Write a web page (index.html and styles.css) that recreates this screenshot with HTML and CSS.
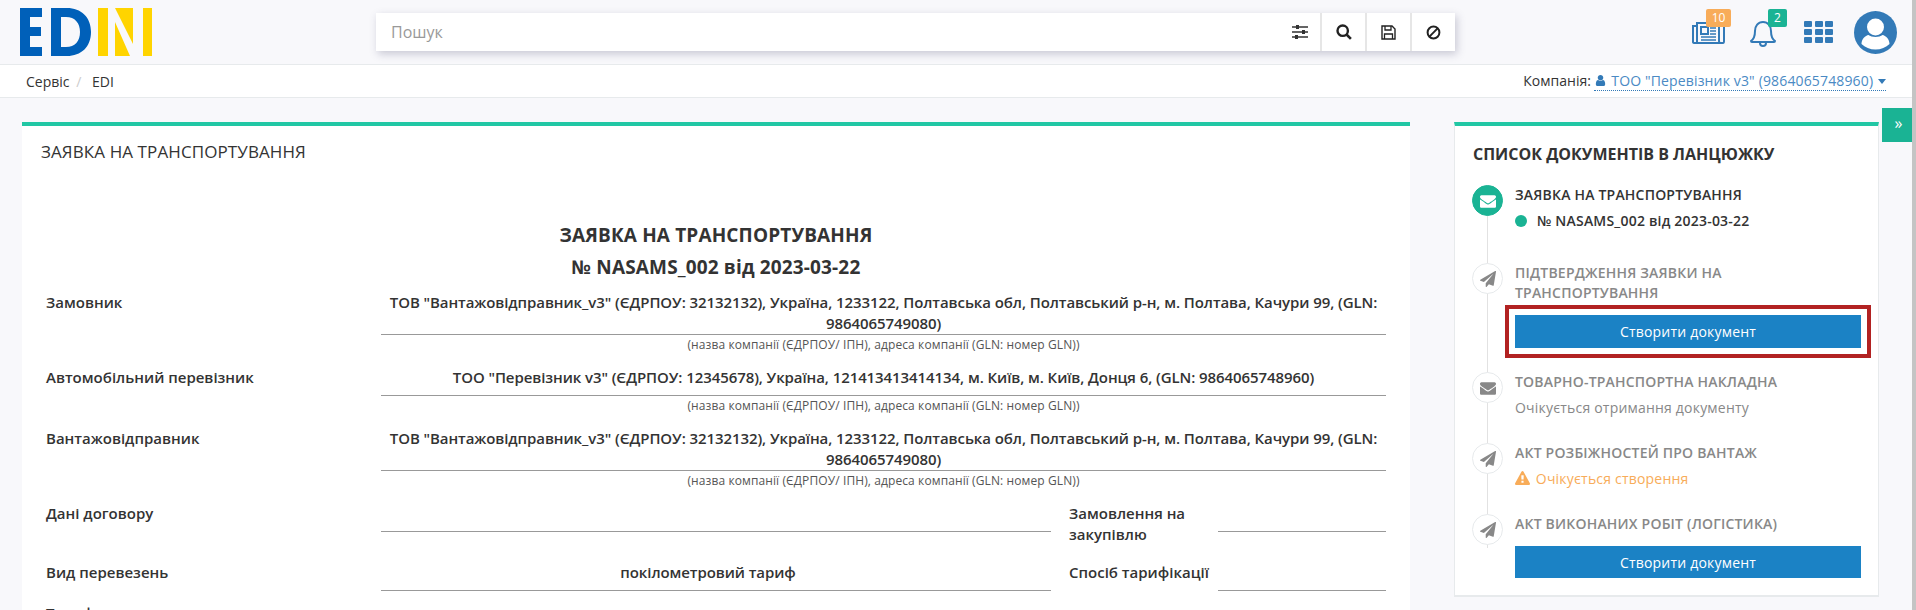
FILE: index.html
```html
<!DOCTYPE html>
<html lang="uk">
<head>
    <meta charset="UTF-8">
    <title>EDI</title>
    <link rel="stylesheet" href="styles.css">
</head>
<body>
    <header class="topbar">
        <svg class="logo" width="132" height="48" viewBox="0 0 132 48">
            <path fill="#0060b9" d="M0 0h22v9H10v10h11v9H10v11h12v9H0z"/>
            <path fill="#0060b9" fill-rule="evenodd" d="M31 0h16c14 0 24 9 24 24s-10 24-24 24H31zM41 9v30h5c9 0 14-6 14-15S55 9 46 9z"/>
            <rect fill="#ffd400" x="78" width="10" height="48"/>
            <path fill="#ffd400" d="M95 0h18v36zM95 14l15 34H95zM123 0h9v48h-9z"/>
        </svg>
        <div class="search">
            <div class="search-input">
                <span class="placeholder">Пошук</span>
                <svg class="search-icon" width="16" height="14" viewBox="0 0 16 14">
                    <path d="M0 2h16M0 7h16M0 12h16" stroke="#333" stroke-width="1.4"/>
                    <rect x="4" y="0" width="3" height="4" fill="#333"/>
                    <rect x="10" y="5" width="3" height="4" fill="#333"/>
                    <rect x="3" y="10" width="3" height="4" fill="#333"/>
                </svg>
            </div>
            <div class="search-btn">
                <svg width="16" height="16" viewBox="0 0 16 16"><circle cx="6.7" cy="6.7" r="5.2" fill="none" stroke="#222" stroke-width="2.4"/><path d="M10.500 10.500l4.400 4.400" stroke="#222" stroke-width="2.600"/></svg>
            </div>
            <div class="search-btn">
                <svg width="15" height="15" viewBox="0 0 15 15"><path d="M1 1h10l3 3v10H1z" fill="none" stroke="#222" stroke-width="1.4"/><path d="M4 1v4h6V1M3.500 14V9h8v5" fill="none" stroke="#222" stroke-width="1.3"/></svg>
            </div>
            <div class="search-btn">
                <svg width="15" height="15" viewBox="0 0 15 15"><circle cx="7.500" cy="7.500" r="5.900" fill="none" stroke="#222" stroke-width="2"/><path d="M3.400 11.600l8.200-8.200" stroke="#222" stroke-width="2"/></svg>
            </div>
        </div>
        <div class="top-icons">
            <div class="top-icon icon-news">
                <svg width="33" height="22" viewBox="0 0 33 22" fill="none" stroke="#337ab7" stroke-width="2">
                    <path d="M5 4H1v16c0 1 1 1 2 1h28c1 0 1-1 1-2V4h-5"/>
                    <path d="M5 20V1h22v18c0 1 .5 2 1.500 2"/>
                    <rect x="9" y="5" width="7" height="7"/>
                    <path d="M18 6h6M18 9h6M18 12h6M9 15h15M9 18h15" stroke-width="1.600"/>
                </svg>
                <span class="badge badge-orange">10</span>
            </div>
            <div class="top-icon icon-bell">
                <svg width="26" height="29" viewBox="0 0 26 29" fill="none" stroke="#337ab7" stroke-width="2">
                    <path d="M1 23c3-2 4-5 4-10 0-5 3-9 8-9s8 4 8 9c0 5 1 8 4 10 0 .5-.5 1-1 1H2c-.5 0-1-.5-1-1z"/>
                    <path d="M10 25c0 2 1.500 3 3 3s3-1 3-3"/>
                </svg>
                <span class="badge badge-green">2</span>
            </div>
            <div class="apps">
                <i></i><i></i><i></i><i></i><i></i><i></i><i></i><i></i><i></i>
            </div>
            <svg class="avatar" width="43" height="43" viewBox="0 0 43 43">
                <circle cx="21.500" cy="21.500" r="21.500" fill="#337ab7"/>
                <circle cx="21.500" cy="16" r="8.500" fill="#fff"/>
                <path d="M7.500 33c0-5 4-8.500 7-9 3 2.500 11 2.500 14 0 3 .5 7 4 7 9-3.500 3.500-8.500 5.500-14 5.500s-10.500-2-14-5.500z" fill="#fff"/>
            </svg>
        </div>
    </header>

    <nav class="crumbs">
        <div class="crumb-path">
            <span>Сервіс</span>
            <span class="crumb-sep">/</span>
            <span>EDI</span>
        </div>
        <div class="company">
            <span>Компанія:</span>
            <span class="company-link">
                <svg width="13" height="13" viewBox="0 0 1792 1792"><path fill="#337ab7" d="M1536 1399q0 109-62.5 187t-150.500 78h-854q-88 0-150.500-78t-62.500-187q0-85 8.500-160.500t31.500-152 58.500-131 94-89 134.500-34.500q131 128 313 128t313-128q76 0 134.500 34.500t94 89 58.500 131 31.500 152 8.500 160.500zm-256-887q0 159-112.500 271.500t-271.500 112.500-271.500-112.500-112.500-271.500 112.500-271.500 271.500-112.500 271.500 112.500 112.500 271.500z"/></svg>
                ТОО "Перевізник v3" (9864065748960)
                <span class="caret"></span>
            </span>
        </div>
    </nav>

    <main class="content">
        <section class="panel doc-panel">
            <h2 class="panel-title">ЗАЯВКА НА ТРАНСПОРТУВАННЯ</h2>
            <div class="doc-head">
                <div>ЗАЯВКА НА ТРАНСПОРТУВАННЯ</div>
                <div>№ NASAMS_002 від 2023-03-22</div>
            </div>

            <div class="row">
                <div class="label">Замовник</div>
                <div class="field-wrap">
                    <div class="field">ТОВ "Вантажовідправник_v3" (ЄДРПОУ: 32132132), Україна, 1233122, Полтавська обл, Полтавський р-н, м. Полтава, Качури 99, (GLN: 9864065749080)</div>
                    <div class="hint">(назва компанії (ЄДРПОУ/ ІПН), адреса компанії (GLN: номер GLN))</div>
                </div>
            </div>
            <div class="row">
                <div class="label">Автомобільний перевізник</div>
                <div class="field-wrap">
                    <div class="field">ТОО "Перевізник v3" (ЄДРПОУ: 12345678), Україна, 121413413414134, м. Київ, м. Київ, Донця 6, (GLN: 9864065748960)</div>
                    <div class="hint">(назва компанії (ЄДРПОУ/ ІПН), адреса компанії (GLN: номер GLN))</div>
                </div>
            </div>
            <div class="row">
                <div class="label">Вантажовідправник</div>
                <div class="field-wrap">
                    <div class="field">ТОВ "Вантажовідправник_v3" (ЄДРПОУ: 32132132), Україна, 1233122, Полтавська обл, Полтавський р-н, м. Полтава, Качури 99, (GLN: 9864065749080)</div>
                    <div class="hint">(назва компанії (ЄДРПОУ/ ІПН), адреса компанії (GLN: номер GLN))</div>
                </div>
            </div>
            <div class="row row-split">
                <div class="label">Дані договору</div>
                <div class="field"></div>
                <div class="label label-side">Замовлення на закупівлю</div>
                <div class="field"></div>
            </div>
            <div class="row row-split">
                <div class="label">Вид перевезень</div>
                <div class="field field-offset">покілометровий тариф</div>
                <div class="label label-side">Спосіб тарифікації</div>
                <div class="field"></div>
            </div>
            <div class="row">
                <div class="label">Тариф</div>
            </div>
        </section>

        <aside class="panel chain-panel">
            <h3 class="chain-title">СПИСОК ДОКУМЕНТІВ В ЛАНЦЮЖКУ</h3>
            <div class="timeline">
                <div class="step step-1">
                    <div class="step-icon step-icon-done">
                        <svg width="16" height="16" viewBox="0 0 1792 1792"><path fill="#fff" d="M1792 710v794q0 66-47 113t-113 47h-1472q-66 0-113-47t-47-113v-794q44 49 101 87 362 246 497 345 57 42 92.500 65.500t94.500 48 110 24.500h2q51 0 110-24.500t94.500-48 92.500-65.500q170-123 498-345 57-39 100-87zm0-294q0 79-49 151t-122 123q-376 261-468 325-10 7-42.500 30.500t-54 38-52 32.500-57.500 27-50 9h-2q-23 0-50-9t-57.500-27-52-32.500-54-38-42.500-30.500q-91-64-262-182.500t-205-142.500q-62-42-117-115.500t-55-136.500q0-78 41.500-130t118.500-52h1472q65 0 112.500 47t47.500 113z"/></svg>
                    </div>
                    <div class="step-body">
                        <div class="step-name step-name-done">ЗАЯВКА НА ТРАНСПОРТУВАННЯ</div>
                        <div class="step-doc"><span class="dot"></span>№ NASAMS_002 від 2023-03-22</div>
                    </div>
                </div>
                <div class="step step-2">
                    <div class="step-icon">
                        <svg width="16" height="16" viewBox="0 0 1792 1792"><path fill="#888" d="M1764 11q33 24 27 64l-256 1536q-5 29-32 45-14 8-31 8-11 0-24-5l-453-185-242 295q-18 23-49 23-13 0-22-4-19-7-30.500-23.500t-11.500-36.500v-349l864-1059-1069 925-395-162q-37-14-40-55-2-40 32-59l1664-960q15-9 32-9 20 0 36 11z"/></svg>
                    </div>
                    <div class="step-body">
                        <div class="step-name">ПІДТВЕРДЖЕННЯ ЗАЯВКИ НА ТРАНСПОРТУВАННЯ</div>
                        <button class="create-btn create-btn-marked">Створити документ</button>
                    </div>
                </div>
                <div class="step step-3">
                    <div class="step-icon">
                        <svg width="16" height="16" viewBox="0 0 1792 1792"><path fill="#888" d="M1792 710v794q0 66-47 113t-113 47h-1472q-66 0-113-47t-47-113v-794q44 49 101 87 362 246 497 345 57 42 92.500 65.500t94.500 48 110 24.500h2q51 0 110-24.500t94.500-48 92.500-65.500q170-123 498-345 57-39 100-87zm0-294q0 79-49 151t-122 123q-376 261-468 325-10 7-42.500 30.500t-54 38-52 32.500-57.500 27-50 9h-2q-23 0-50-9t-57.500-27-52-32.500-54-38-42.500-30.500q-91-64-262-182.500t-205-142.500q-62-42-117-115.500t-55-136.500q0-78 41.500-130t118.500-52h1472q65 0 112.500 47t47.500 113z"/></svg>
                    </div>
                    <div class="step-body">
                        <div class="step-name">ТОВАРНО-ТРАНСПОРТНА НАКЛАДНА</div>
                        <div class="step-note">Очікується отримання документу</div>
                    </div>
                </div>
                <div class="step step-4">
                    <div class="step-icon">
                        <svg width="16" height="16" viewBox="0 0 1792 1792"><path fill="#888" d="M1764 11q33 24 27 64l-256 1536q-5 29-32 45-14 8-31 8-11 0-24-5l-453-185-242 295q-18 23-49 23-13 0-22-4-19-7-30.500-23.500t-11.500-36.500v-349l864-1059-1069 925-395-162q-37-14-40-55-2-40 32-59l1664-960q15-9 32-9 20 0 36 11z"/></svg>
                    </div>
                    <div class="step-body">
                        <div class="step-name">АКТ РОЗБІЖНОСТЕЙ ПРО ВАНТАЖ</div>
                        <div class="step-note step-note-warn">
                            <svg width="15" height="15" viewBox="0 0 1792 1792"><path fill="#f8ac59" d="M1024 1375v-190q0-14-9.500-23.500t-22.500-9.500h-192q-13 0-22.500 9.500t-9.500 23.500v190q0 14 9.500 23.500t22.500 9.500h192q13 0 22.500-9.500t9.500-23.500zm-2-374l18-459q0-12-10-19-13-11-24-11h-220q-11 0-24 11-10 7-10 21l17 457q0 10 10 16.500t24 6.500h185q14 0 23.500-6.500t10.500-16.500zm-14-934l768 1408q35 63-2 126-17 29-46.500 46t-63.500 17h-1536q-34 0-63.500-17t-46.500-46q-37-63-2-126l768-1408q17-31 47-49t65-18 65 18 47 49z"/></svg>
                            Очікується створення
                        </div>
                    </div>
                </div>
                <div class="step step-5">
                    <div class="step-icon">
                        <svg width="16" height="16" viewBox="0 0 1792 1792"><path fill="#888" d="M1764 11q33 24 27 64l-256 1536q-5 29-32 45-14 8-31 8-11 0-24-5l-453-185-242 295q-18 23-49 23-13 0-22-4-19-7-30.500-23.500t-11.500-36.500v-349l864-1059-1069 925-395-162q-37-14-40-55-2-40 32-59l1664-960q15-9 32-9 20 0 36 11z"/></svg>
                    </div>
                    <div class="step-body">
                        <div class="step-name">АКТ ВИКОНАНИХ РОБІТ (ЛОГІСТИКА)</div>
                        <button class="create-btn">Створити документ</button>
                    </div>
                </div>
            </div>
        </aside>
    </main>

    <div class="panel-toggle">»</div>
    <div class="scroll-thumb"></div>
</body>
</html>
```

FILE: styles.css
```css
* {
    box-sizing: border-box;
}

html, body {
    height: 610px;
    overflow: hidden;
}

body {
    margin: 0;
    font-family: "Open Sans", "Noto Sans", sans-serif;
    font-size: 14px;
    color: #333;
    background-color: #f8f8fb;
}

/* top bar */
.topbar {
    display: flex;
    align-items: flex-start;
    height: 65px;
    padding: 8px 0 0 20px;
    border-bottom: 1px solid #e7eaec;
}

.logo {
    flex: none;
}

.search {
    display: flex;
    width: 1079px;
    height: 38px;
    margin: 5px 0 0 224px;
    background-color: #fff;
    box-shadow: 2px 3px 8px rgba(60, 60, 100, 0.25);
}

.search-input {
    flex: 1;
    display: flex;
    align-items: center;
    justify-content: space-between;
    padding: 0 12px 0 15px;
}

.placeholder {
    font-size: 16px;
    color: #999;
}

.search-btn {
    display: flex;
    align-items: center;
    justify-content: center;
    width: 45px;
    border-left: 2px solid #e6e6e6;
}

.top-icons {
    position: relative;
    flex: 1;
    height: 56px;
}

.top-icon {
    position: absolute;
}

.icon-news {
    left: 237px;
    top: 14px;
}

.icon-bell {
    left: 295px;
    top: 10px;
}

.badge {
    position: absolute;
    display: block;
    height: 18px;
    border-radius: 2px;
    color: #fff;
    font-size: 12px;
    line-height: 18px;
    text-align: center;
}

.badge-orange {
    left: 14px;
    top: -13px;
    width: 25px;
    background-color: #f8ac59;
}

.badge-green {
    left: 18px;
    top: -9px;
    width: 19px;
    background-color: #1ab394;
}

.apps {
    position: absolute;
    left: 349px;
    top: 13px;
    display: grid;
    grid-template-columns: repeat(3, 8px);
    grid-auto-rows: 6px;
    gap: 2px 2.5px;
}

.apps i {
    background-color: #337ab7;
    border-radius: 1px;
}

.avatar {
    position: absolute;
    left: 399px;
    top: 3px;
}

/* breadcrumbs */
.crumbs {
    display: flex;
    justify-content: space-between;
    align-items: center;
    height: 33px;
    padding: 0 30px 0 26px;
    background-color: #fff;
    border-bottom: 1px solid #e7eaec;
}

.crumb-sep {
    margin: 0 7px 0 3px;
    color: #ccc;
}

.company-link {
    display: inline-block;
    color: #4a8ac4;
    line-height: 19px;
    letter-spacing: 0.15px;
    border-bottom: 1px dotted #337ab7;
}

.company-link svg {
    vertical-align: -1px;
}

.caret {
    display: inline-block;
    width: 0;
    height: 0;
    margin-left: 1px;
    border-top: 5px solid #337ab7;
    border-left: 4.500px solid transparent;
    border-right: 4.500px solid transparent;
    vertical-align: 2px;
}

/* panels */
.content {
    display: flex;
    align-items: flex-start;
    gap: 44px;
    padding: 24px 0 0 22px;
}

.panel {
    background-color: #fff;
    border-top: 4px solid #21c7a4;
}

.doc-panel {
    width: 1388px;
    height: 500px;
    padding: 15px 24px 0;
}

.panel-title {
    margin: 0 0 0 -5px;
    font-size: 17px;
    font-weight: 400;
    line-height: 22px;
    letter-spacing: 0.1px;
}

.doc-head {
    margin: 56px 0 9px;
    text-align: center;
    font-size: 19px;
    font-weight: 700;
    line-height: 32px;
    letter-spacing: 0.15px;
}

.row {
    display: grid;
    grid-template-columns: 335px 1fr;
    align-items: start;
    margin-bottom: 15px;
    font-size: 15px;
}

.row-split {
    grid-template-columns: 335px 670px 167px 168px;
    margin-bottom: 17px;
}

.row-split + .row-split {
    margin-bottom: 12px;
}

.label {
    font-weight: 600;
    line-height: 21px;
}

.label-side {
    padding-left: 18px;
}

.field {
    min-height: 29px;
    font-weight: 600;
    line-height: 21px;
    letter-spacing: -0.08px;
    text-align: center;
    border-bottom: 1px solid #999;
}

.field-offset {
    padding-right: 16px;
}

.hint {
    height: 17px;
    font-size: 12px;
    line-height: 20px;
    letter-spacing: 0.1px;
    color: #555;
    text-align: center;
}

/* document chain */
.chain-panel {
    width: 425px;
    height: 475px;
    padding: 16px 18px 0 17px;
    border-left: 1px solid #e7eaec;
    border-right: 1px solid #e7eaec;
    border-bottom: 2px solid #e7eaec;
}

.chain-title {
    margin: 0 0 0 1px;
    font-size: 16px;
    font-weight: 700;
    line-height: 24px;
}

.timeline {
    position: relative;
    margin-top: 19px;
}

.timeline::before {
    content: "";
    position: absolute;
    left: 15px;
    top: 15px;
    bottom: 30px;
    width: 1px;
    background-color: #e2e2e2;
}

.step {
    position: relative;
    display: flex;
    gap: 12px;
}

.step-1 {
    height: 78px;
}

.step-2 {
    height: 109px;
}

.step-3 {
    height: 71px;
}

.step-4 {
    height: 71px;
}

.step-icon {
    flex: none;
    display: flex;
    align-items: center;
    justify-content: center;
    width: 31px;
    height: 31px;
    border-radius: 50%;
    background-color: #fff;
    border: 1px solid #e7eaec;
}

.step-icon-done {
    background-color: #1ab394;
    border-color: #1ab394;
}

.step-body {
    flex: 1;
}

.step-name {
    font-size: 14px;
    font-weight: 600;
    line-height: 20px;
    color: #888;
    letter-spacing: 0.2px;
}

.step-name-done {
    color: #333;
}

.step-doc {
    display: flex;
    align-items: center;
    margin-top: 6px;
    font-size: 14px;
    font-weight: 600;
    line-height: 20px;
    letter-spacing: 0.2px;
}

.dot {
    width: 12px;
    height: 12px;
    margin-right: 10px;
    border-radius: 50%;
    background-color: #1ab394;
}

.step-note {
    margin-top: 6px;
    font-size: 14px;
    line-height: 20px;
    letter-spacing: 0.2px;
    color: #888;
}

.step-note-warn {
    color: #f8ac59;
}

.step-note-warn svg {
    margin-right: 2px;
    vertical-align: -2px;
}

.create-btn {
    display: block;
    width: 346px;
    height: 32px;
    margin-top: 12px;
    border: 0;
    background-color: #1b82c5;
    color: #fff;
    font-family: inherit;
    font-size: 14px;
    letter-spacing: 0.2px;
}

.create-btn-marked {
    height: 33px;
    box-shadow: 0 0 0 6px #fff, 0 0 0 10px #b22222;
}

.panel-toggle {
    position: absolute;
    left: 1882px;
    top: 108px;
    width: 30px;
    height: 34px;
    padding-left: 3px;
    background-color: #1ab394;
    color: #fff;
    font-size: 16px;
    line-height: 30px;
    text-align: center;
}

.scroll-thumb {
    position: absolute;
    right: 0;
    top: 0;
    width: 4px;
    height: 610px;
    background-color: #c4c4c4;
}
```
